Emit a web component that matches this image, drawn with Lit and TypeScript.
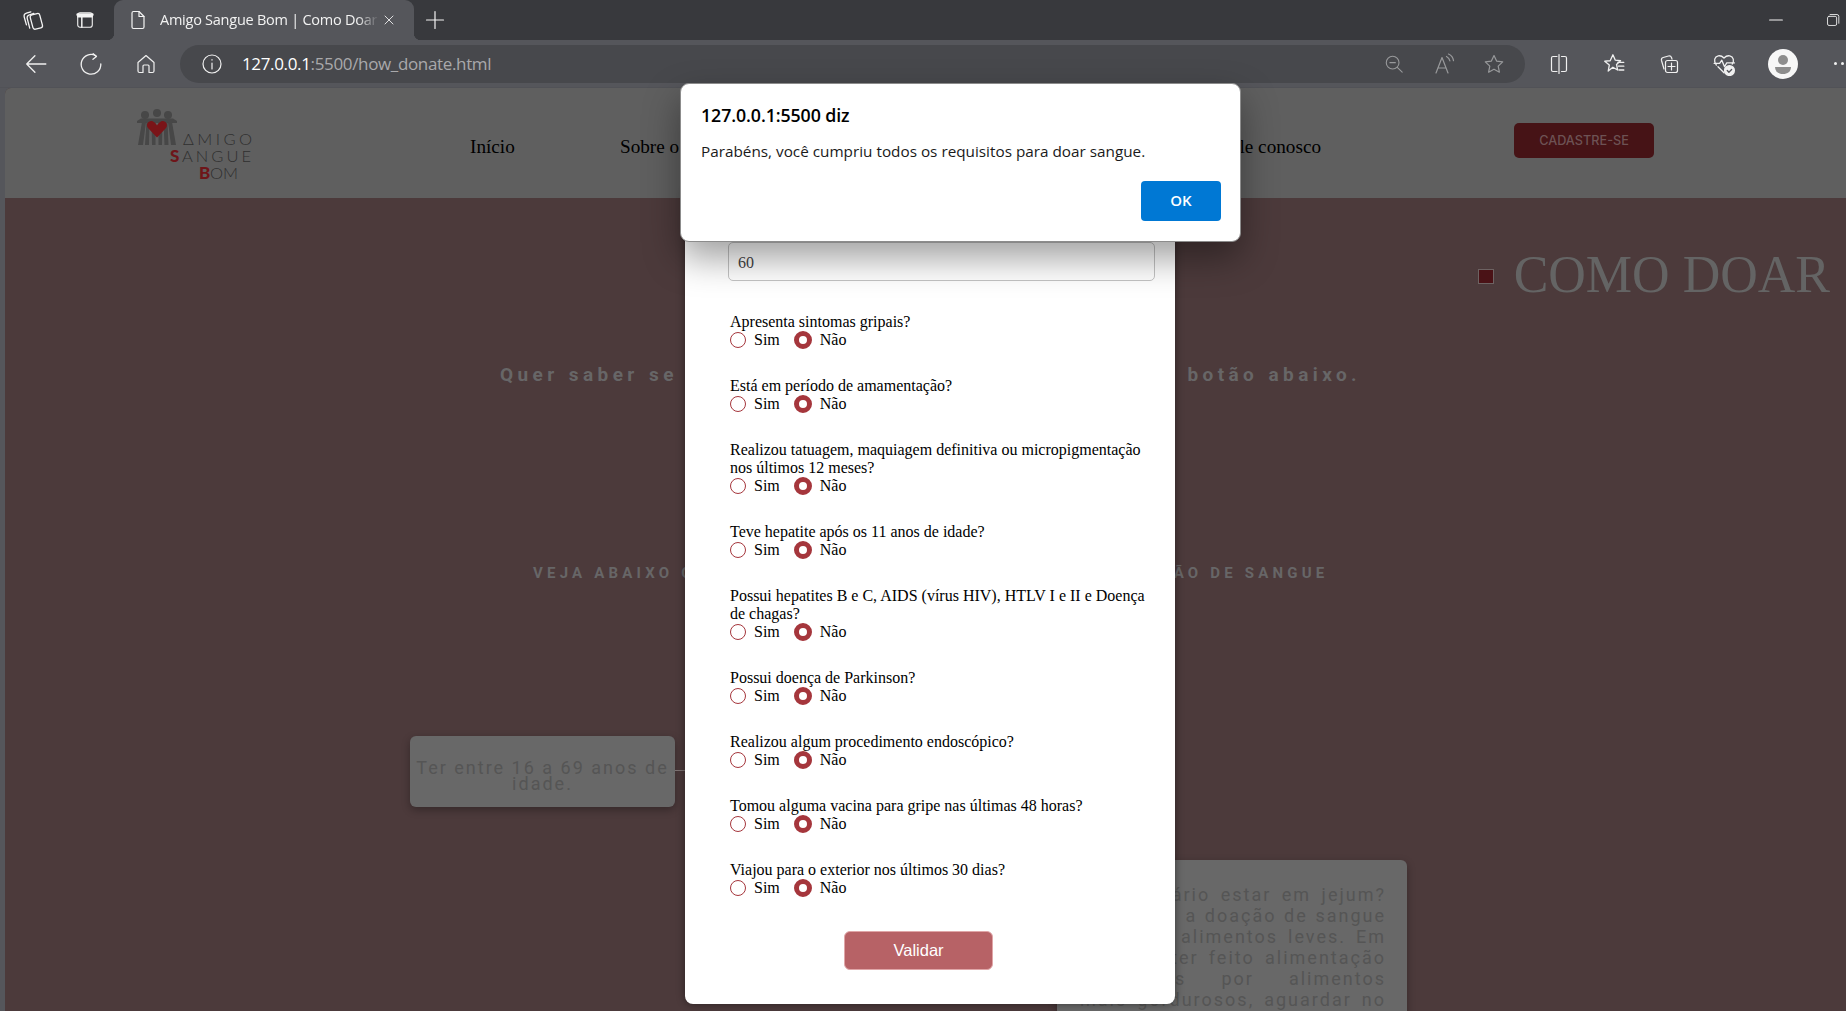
import { LitElement, html, css, svg } from "lit";
import { customElement } from "lit/decorators.js";

const QUESTIONS = [
  "Apresenta sintomas gripais?",
  "Está em período de amamentação?",
  "Realizou tatuagem, maquiagem definitiva ou micropigmentação nos últimos 12 meses?",
  "Teve hepatite após os 11 anos de idade?",
  "Possui hepatites B e C, AIDS (vírus HIV), HTLV I e II e Doença de chagas?",
  "Possui doença de Parkinson?",
  "Realizou algum procedimento endoscópico?",
  "Tomou alguma vacina para gripe nas últimas 48 horas?",
  "Viajou para o exterior nos últimos 30 dias?",
];

const CARD_LINES = [
  "É necessário estar em jejum?",
  "Não. Para a doação de sangue",
  "consumir alimentos leves. Em",
  "caso de ter feito alimentação",
  "reforçadas por alimentos",
  "mais gordurosos, aguardar no",
  "mínimo 3 horas para doar.",
];

const LEGS = [
  "3,37 8,37 11,14 7,14",
  "10,37 14,37 14.500,14 11.500,14",
  "17,37 20.500,37 20.500,14 16.500,14",
  "23.500,37 27,37 27.500,14 23.500,14",
  "29.500,37 33.500,37 32.500,14 28.500,14",
  "36,37 41,37 37,14 33,14",
];

const ic = (body: unknown, size = 22) => html`<svg class="icon" width=${size} height=${size} viewBox="0 0 22 22" fill="none" stroke="currentColor" stroke-width="1.2" stroke-linecap="round" stroke-linejoin="round">${body}</svg>`;

const I = {
  workspaces: svg`<rect x="9.500" y="5.500" width="9" height="13.500" rx="2" transform="rotate(-15 14 12)"/><path d="M8 18.500 5.800 10a3 3 0 0 1 2-3.700l4-1.300"/><path d="M5 15.500 3 8.500a3 3 0 0 1 2-3.700l4-1.300"/>`,
  tabs: svg`<rect x="3" y="3" width="16" height="16" rx="2.500"/><path d="M3 7.500h16M7.500 7.500V19" stroke-width="1.600"/><path d="M3 5.200h16" stroke-width="3"/>`,
  page: svg`<path d="M5 4a1.500 1.500 0 0 1 1.500-1.500H12l5 5V18a1.500 1.500 0 0 1-1.500 1.500h-9A1.500 1.500 0 0 1 5 18z"/><path d="M12 2.500V7.500h5"/>`,
  close: svg`<path d="M5.500 5.500l11 11M16.500 5.500l-11 11"/>`,
  plus: svg`<path d="M11 2.500v17M2.500 11h17"/>`,
  back: svg`<path d="M20 11H2.500M10 3.500 2.500 11l7.500 7.500"/>`,
  reload: svg`<path d="M15.500 3.500 A9 9 0 1 0 20 11"/><path d="M13.500 1.200l3 2.600-3.200 2.500" transform="translate(-.5 .4)"/>`,
  home: svg`<path d="M3 9.500 11 2.500l8 7V18a1.500 1.500 0 0 1-1.500 1.500H14V13a1 1 0 0 0-1-1H9a1 1 0 0 0-1 1v6.500H4.500A1.500 1.500 0 0 1 3 18z"/>`,
  info: svg`<circle cx="11" cy="11" r="9"/><path d="M11 10v6M11 6.500v.6"/>`,
  zoom: svg`<circle cx="9.500" cy="9.500" r="7"/><path d="M14.600 14.600 20 20M6.500 9.500h6"/>`,
  read: svg`<path d="M3 20 9 4.500 15 20M5 15h8"/><path d="M13.500 3.500c2 1 3 2.400 3.400 4.400M15.500 1c3 1.400 4.600 3.600 5 6.600"/>`,
  star: svg`<path d="M11 2.500l2.600 5.600 6.100.8-4.500 4.200 1.200 6.100L11 16.200l-5.400 3 1.200-6.100-4.500-4.200 6.100-.8z"/>`,
  split: svg`<path d="M9 3.500H5A1.500 1.500 0 0 0 3.500 5v12A1.500 1.500 0 0 0 5 18.500h4M13.500 3.500H17A1.500 1.500 0 0 1 18.500 5v12a1.500 1.500 0 0 1-1.500 1.500h-3.500M11 1.500v19"/>`,
  fav: svg`<path d="M10 2.500l2.200 5 4.800.5-3.700 3.400 1 5.100L10 14l-4.300 3.500 1-5.500L2.500 8.400l5-.4z"/><path d="M14.500 9.500H20M15 13h5M15.500 16.500H20"/>`,
  coll: svg`<path d="M6 16 3.500 7.500A2.500 2.500 0 0 1 5.200 4.500l5.300-1.500a2.500 2.500 0 0 1 3 1.500l.5 1.700"/><rect x="7.500" y="7.500" width="12" height="12" rx="2"/><path d="M13.500 10v7M10 13.500h7"/>`,
  health: svg`<path d="M4 12C2.500 10 2 8.500 2.500 6.500 3.300 3.500 7.500 2 11 5.500 14.500 2 18.700 3.500 19.500 6.500c.4 1.700 0 3.200-1 4.500"/><path d="M2 10.500h5l2-3 2.500 6 2-3.500h7"/><path d="M5.500 13.500 11 19"/><circle cx="16" cy="17" r="4.500" fill="currentColor"/><path d="M14 17l1.500 1.500 2.500-2.500" stroke="#55565b"/>`,
  min: svg`<path d="M4 11h14"/>`,
  restore: svg`<rect x="3.500" y="6" width="12.500" height="12.500" rx="2"/><path d="M7 3.500h9.500a2.500 2.500 0 0 1 2.500 2.500v9.500"/>`,
};

@customElement("app-root")
export class AppRoot extends LitElement {
  static styles = css`
    :host { display: block; position: relative; width: 1846px; height: 1011px; overflow: hidden; background: #55565b; font-family: "Liberation Serif", serif; }
    * { box-sizing: border-box; }
    .icon { display: block; flex: none; }

    /* browser chrome */
    .tabstrip { display: flex; align-items: stretch; height: 40px; padding-left: 7px; background: #38393d; color: #f4f4f4; }
    .ib { flex: none; display: flex; align-items: center; justify-content: center; width: 52px; }
    .tab { position: relative; flex: none; display: flex; align-items: center; width: 300px; margin-left: 3px; padding-left: 13px; background: #55565b; border-radius: 9px 9px 0 0; }
    .tab::before, .tab::after { content: ""; position: absolute; bottom: 0; width: 7px; height: 7px; }
    .tab::before { left: -7px; background: radial-gradient(circle at 0 0, transparent 7px, #55565b 7.500px); }
    .tab::after { right: -7px; background: radial-gradient(circle at 100% 0, transparent 7px, #55565b 7.500px); }
    .tab-title { width: 219px; margin-left: 11px; margin-top: -2px; overflow: hidden; white-space: nowrap; font: 14.500px "Open Sans", sans-serif; letter-spacing: -0.25px; color: #f2f2f2;
      -webkit-mask-image: linear-gradient(90deg, #000 90%, transparent 100%); mask-image: linear-gradient(90deg, #000 90%, transparent 100%); }
    .tab-close { margin-left: 2px; }
    .plus { width: 40px; margin-left: 1px; }
    .spacer { flex: 1; }
    .winbtn { width: 57px; }
    .winbtn-last { width: 41.500px; justify-content: flex-end; padding-right: 5px; }

    .toolbar { display: flex; align-items: center; height: 48px; padding-left: 8px; color: #f0f0f0; border-bottom: 1px solid #515257; }
    .tb { flex: none; display: flex; align-items: center; justify-content: center; width: 55px; }
    .address { flex: none; display: flex; align-items: center; width: 1345px; height: 38px; margin-left: 7px; margin-right: 6.500px; border-radius: 19px; background: #47484c; padding-left: 21px; }
    .url { margin-left: 19px; font: 17px "Open Sans", sans-serif; letter-spacing: -0.35px; color: #a9a9ab; white-space: nowrap; }
    .url b { font-weight: 400; color: #fff; }
    .addr-tools { margin-left: auto; display: flex; align-items: center; color: #98999b; padding-right: 6px; }
    .addr-tools .tb { width: 50px; }
    .tb-avatar { padding-left: 7px; }
    .avatar { width: 30px; height: 30px; border-radius: 50%; background: #f7f7f7; }
    .dots { width: 55px; justify-content: flex-start; padding-left: 27px; }
    .dots i { flex: none; width: 3px; height: 3px; margin-right: 4px; border-radius: 50%; background: #f0f0f0; }

    /* page */
    .page { margin-left: 5px; height: 923px; overflow: hidden; border-radius: 6px 0 0 0; background: #4c3a3b; }
    .header { display: flex; align-items: flex-start; height: 110px; background: #5f5f5f; padding-left: 130px; }
    .logo { flex: none; display: block; margin-top: 20px; }
    .logo text { font-family: "Lato", sans-serif; font-weight: 300; font-size: 16.500px; fill: #2f2f2f; }
    .logo .strong { font-weight: 900; font-size: 17px; fill: #6e1519; }
    .logo .people { fill: #474747; }
    .logo .heart { fill: #7a1418; }
    .nav { flex: none; display: flex; justify-content: space-between; width: 851px; margin-left: 215px; margin-top: 48px; font-size: 19.200px; line-height: 22px; color: #000; }
    .signup { flex: none; width: 140px; height: 35px; margin-left: 193px; margin-top: 35px; border-radius: 5px; background: #461316; color: #6d5254; font: 500 12.700px/35px "Inter", sans-serif; text-align: center; }

    .title-row { display: flex; align-items: center; justify-content: flex-end; height: 60px; margin-top: 47px; padding-right: 16px; }
    .title-mark { width: 16px; height: 15px; margin-right: 20px; margin-top: 2px; background: #4a1216; border: 1px solid #6d6262; }
    .title { font-size: 52px; font-weight: 400; line-height: 60px; color: #646464; margin: 0; white-space: nowrap; }
    .lead, .sub { font-family: "Roboto", sans-serif; font-weight: 700; color: #676667; white-space: nowrap; text-align: justify; text-align-last: justify; }
    .lead { width: 861px; margin: 58px 0 0 495px; font-size: 19px; line-height: 24px; letter-spacing: 4.400px; }
    .sub { width: 793px; margin: 176px 0 0 528px; font-size: 15px; line-height: 20px; letter-spacing: 4.200px; }

    .cards { display: flex; align-items: flex-start; margin-top: 153px; padding-left: 405px; }
    .card { flex: none; border-radius: 6px; background: #686868; color: #555; font-family: "Roboto", sans-serif; font-size: 18px; letter-spacing: 2px; box-shadow: 0 3px 8px rgba(0,0,0,.3); }
    .card-left { position: relative; width: 265px; height: 71px; padding-top: 24px; line-height: 16px; text-align: center; }
    .card-left::after { content: ""; position: absolute; left: 100%; top: 34px; width: 12px; height: 1px; background: #7d7272; }
    .card-right { width: 350px; height: 220px; margin: 124px 0 0 382px; padding: 24px 21px 0 23px; line-height: 21px; }
    .card-right span { display: block; text-align: justify; text-align-last: justify; white-space: nowrap; }

    /* modal */
    .modal { position: absolute; left: 685px; top: 190px; width: 490px; height: 814px; padding: 52px 43px 0; background: #fff; border-radius: 8px; box-shadow: 0 0 8px rgba(0,0,0,.45); color: #000; font-size: 16px; }
    .age { display: block; width: 427px; height: 39px; padding: 2px 9px 0; border: 1px solid #c4c4c4; border-radius: 5px; background: #fff; font: 16px "Liberation Serif", serif; color: #444; outline: none; }
    .q { width: 424px; margin: 0 0 28px 2px; line-height: 18px; }
    .qs { margin-top: 31.500px; }
    .opts { display: flex; align-items: center; height: 18px; }
    .opts input { appearance: none; flex: none; margin: 0 8px 0 0; width: 16px; height: 16px; border: 1px solid #a5363c; border-radius: 50%; background: #fff; }
    .opts input:checked { width: 18px; height: 18px; border: 5.500px solid #a5363c; }
    .opts label { margin-right: 14px; }
    .validate { display: block; width: 149px; height: 39px; margin: 34.500px 0 0 116px; padding: 0; border: 1px solid #e0a6a8; border-radius: 6px; background: #b76266; color: #fff; font: 16.500px "Liberation Sans", sans-serif; }

    /* alert */
    .alert { position: absolute; left: 680px; top: 83px; width: 561px; height: 159px; padding: 20px; background: #fff; border: 1px solid #8c8c8c; border-radius: 9px; box-shadow: 0 16px 36px rgba(0,0,0,.38); color: #000; font-family: "Open Sans", sans-serif; }
    .alert h2 { margin: 0; font-size: 17.800px; font-weight: 600; line-height: 22px; letter-spacing: -0.1px; }
    .alert p { margin: 15px 0 0; font-size: 15.300px; line-height: 20px; color: #1a1a1a; }
    .ok { position: absolute; right: 19px; bottom: 20px; width: 80px; height: 40px; padding: 0 0 2px; border: 0; border-radius: 4px; background: #0078d4; color: #fff; font: 600 15px "Open Sans", sans-serif; }
  `;

  render() {
    return html`
      <div class="tabstrip">
        <div class="ib">${ic(I.workspaces, 24)}</div>
        <div class="ib">${ic(I.tabs, 20)}</div>
        <div class="tab">
          ${ic(I.page)}
          <div class="tab-title">Amigo Sangue Bom | Como Doar</div>
          <div class="tab-close">${ic(I.close, 16)}</div>
        </div>
        <div class="ib plus">${ic(I.plus)}</div>
        <div class="spacer"></div>
        <div class="ib winbtn">${ic(I.min, 20)}</div>
        <div class="ib winbtn winbtn-last">${ic(I.restore, 16)}</div>
      </div>
      <div class="toolbar">
        <div class="tb">${ic(I.back, 24)}</div>
        <div class="tb">${ic(I.reload, 24)}</div>
        <div class="tb">${ic(I.home)}</div>
        <div class="address">
          ${ic(I.info)}
          <div class="url"><b>127.0.0.1</b>:5500/how_donate.html</div>
          <div class="addr-tools">
            <div class="tb">${ic(I.zoom, 20)}</div>
            <div class="tb">${ic(I.read, 22)}</div>
            <div class="tb">${ic(I.star)}</div>
          </div>
        </div>
        <div class="tb">${ic(I.split)}</div>
        <div class="tb">${ic(I.fav, 24)}</div>
        <div class="tb">${ic(I.coll)}</div>
        <div class="tb">${ic(I.health, 24)}</div>
        <div class="tb tb-avatar">
          <svg class="avatar" viewBox="0 0 30 30"><circle cx="15" cy="11" r="5" fill="#8d8d8d"/><path d="M7 18h16c0 4.500-3.500 7-8 7s-8-2.500-8-7z" fill="#8d8d8d"/></svg>
        </div>
        <div class="tb dots"><i></i><i></i><i></i></div>
      </div>

      <div class="page">
        <div class="header">
          <svg class="logo" width="120" height="76" viewBox="0 0 120 76">
            <g class="people">
              <circle cx="10" cy="7" r="4"/><circle cx="22" cy="5" r="4"/><circle cx="33" cy="7" r="4"/>
              <path d="M2 13 6 10.500h32L42 13v2H2z"/>
              ${LEGS.map((p) => svg`<polygon points=${p}/>`)}
            </g>
            <path class="heart" d="M22 29.500 13 20c-3-4 1.500-8.500 5-6.500 2 1 3 2 4 4 1-2 2-3 4-4 3.500-2 8 2.500 5 6.500z"/>
            <text x="48" y="37" textLength="69" lengthAdjust="spacing">ΔMIGO</text>
            <text class="strong" x="35" y="54">S</text>
            <text x="47" y="54" textLength="69" lengthAdjust="spacing">ANGUE</text>
            <text class="strong" x="64" y="71">B</text>
            <text x="75" y="71" textLength="28" lengthAdjust="spacing">OM</text>
          </svg>
          <nav class="nav">
            <span>Início</span><span>Sobre o projeto</span><span>Como doar</span><span>Onde doar</span><span>Fale conosco</span>
          </nav>
          <div class="signup">CADASTRE-SE</div>
        </div>
        <main>
          <div class="title-row"><div class="title-mark"></div><h1 class="title">COMO DOAR</h1></div>
          <div class="lead">Quer saber se você está apto a doar hoje? Clique no botão abaixo.</div>
          <div class="sub">VEJA ABAIXO OS PRINCIPAIS REQUISITOS PARA A SUA DOAÇÃO DE SANGUE</div>
          <div class="cards">
            <div class="card card-left">Ter entre 16 a 69 anos de idade.</div>
            <div class="card card-right">${CARD_LINES.map((l) => html`<span>${l}</span>`)}</div>
          </div>
        </main>
      </div>

      <form class="modal">
        <input class="age" type="text" .value=${"60"} />
        <div class="qs">
          ${QUESTIONS.map(
            (q, i) => html`
              <div class="q">
                <div>${q}</div>
                <div class="opts">
                  <input type="radio" name="q${i}" id="s${i}" />
                  <label for="s${i}">Sim</label>
                  <input type="radio" name="q${i}" id="n${i}" checked />
                  <label for="n${i}">Não</label>
                </div>
              </div>
            `,
          )}
        </div>
        <button class="validate" type="button">Validar</button>
      </form>

      <div class="alert" role="alertdialog">
        <h2>127.0.0.1:5500 diz</h2>
        <p>Parabéns, você cumpriu todos os requisitos para doar sangue.</p>
        <button class="ok" type="button">OK</button>
      </div>
    `;
  }
}
